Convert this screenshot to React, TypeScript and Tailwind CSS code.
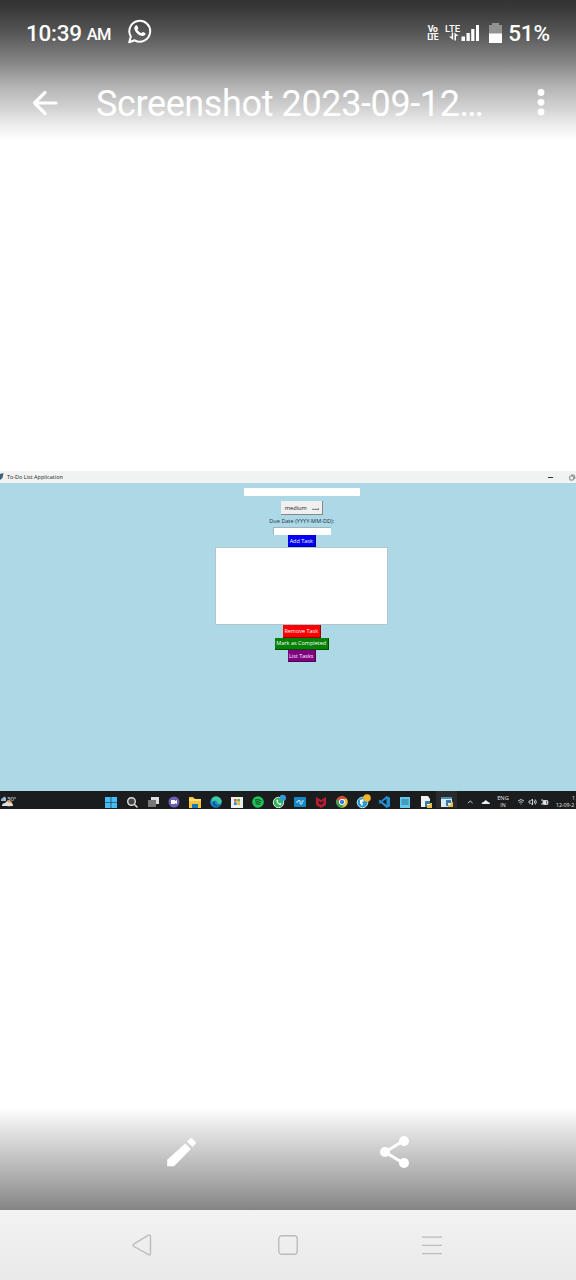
import type { ReactNode } from "react";

function StatusBar() {
  return (
    <div className="flex h-[66px] items-center pl-[26px] pr-[26px]">
      <span className="text-[22.5px] font-medium leading-none tracking-[-0.25px]">10:39</span>
      <span className="ml-[5px] mt-[4px] text-[16.5px] font-medium leading-none tracking-[-0.9px]">AM</span>
      <svg className="mb-[3px] ml-[18px]" width="24" height="25" viewBox="0 0 24 25" fill="none">
        <path d="M1.2 23.2 2.8 17.5a10.4 10.4 0 1 1 3.9 3.8z" stroke="white" strokeWidth="2" strokeLinejoin="round" />
        <path d="M8.2 6.3c.7-.2 1 .1 1.200.6l.9 2c.2.5-.8 1.300-.9 1.700 0 .7 2.500 3.300 3.800 3.500.6 0 1.200-1.400 1.800-1.200l2.100 1c.7.300.4 1.300 0 1.900-.8 1-2.200 1.500-3.600 1-3.300-.9-6.400-3.800-7.100-6.900-.3-1.500.5-3.100 1.800-3.600z" fill="white" />
      </svg>
      <div className="ml-auto flex w-[11px] flex-col text-[9px] font-bold leading-[8px]">
        <span className="pl-[0.5px] tracking-[-0.5px]">Vo</span>
        <span className="text-[8.5px] tracking-[-1.2px]">LTE</span>
      </div>
      <svg className="mb-[1px] ml-[6.500px]" width="35" height="18" viewBox="0 0 35 18" fill="white">
        <text x="0" y="8" fontSize="9.500" fontWeight="500" textLength="15" fontFamily="Roboto, sans-serif">LTE</text>
        <path d="M6.700 8.500h1.500V16L4 12.500h2.700zM9.500 16.500V8.500l4 3.500H11v4.500zM16.500 12.500H20V17h-3.500zM21.500 9h3.300v8h-3.300zM26.200 5h3.200v12h-3.200zM31 1h3v16h-3z" />
      </svg>
      <svg className="mb-[1px] ml-[9px]" width="13" height="20" viewBox="0 0 13 20">
        <path d="M3 0h7v2h3v9H0V2h3z" fill="#929292" />
        <path d="M0 10.500h13V20H0z" fill="white" />
      </svg>
      <span className="ml-[6.500px] text-[22.5px] font-medium leading-none tracking-[-0.1px]">51%</span>
    </div>
  );
}

function ViewerHeader() {
  return (
    <header className="h-[140px] bg-[linear-gradient(180deg,#333_0px,#383838_8px,#555_32px,#858585_62px,#b3b3b3_86px,#d2d2d2_108px,#eee_126px,#fff_140px)] text-white">
      <StatusBar />
      <div className="flex h-[74px] items-center pl-[32px]">
        <svg className="mb-[1px]" width="26" height="26" viewBox="0 0 26 26" fill="none" stroke="white" strokeWidth="3.200" strokeLinecap="round" strokeLinejoin="round">
          <path d="M24 13H2.500M13 2.500 2.500 13 13 23.500" />
        </svg>
        <h1 className="ml-[38px] mt-[2px] w-[390px] whitespace-nowrap text-[36px] leading-none tracking-[-0.38px]">Screenshot 2023-09-12…</h1>
        <svg className="mb-[1px] ml-[51px]" width="8" height="27" viewBox="0 0 8 27" fill="white">
          <circle cx="4" cy="3.500" r="3.400" />
          <circle cx="4" cy="13.300" r="3.400" />
          <circle cx="4" cy="23" r="3.400" />
        </svg>
      </div>
    </header>
  );
}

function TkButton({ className, children }: { className: string; children: ReactNode }) {
  return (
    <button className={`flex h-[12.300px] items-center justify-center whitespace-nowrap border-b border-r border-black/40 pt-[1.500px] text-[5.500px] leading-none text-white ${className}`}>
      {children}
    </button>
  );
}

function TodoWindow() {
  return (
    <section className="flex h-[320px] flex-col bg-[#add8e6] font-['Open_Sans',sans-serif]">
      <div className="flex h-[12px] shrink-0 items-center bg-[#f1f2f2]">
        <svg width="4" height="8" viewBox="0 0 4 8"><path d="M0 1 3.500 0 2.500 5 0 7z" fill="#416078" /></svg>
        <span className="ml-[3px] mt-[1px] text-[5.500px] leading-none text-[#222]">To-Do List Application</span>
        <span className="ml-auto h-[1px] w-[5px] bg-[#333]" />
        <svg className="ml-[16px]" width="7" height="7" viewBox="0 0 7 7" fill="none" stroke="#666" strokeWidth=".8">
          <rect x=".7" y="2" width="4" height="4" rx=".7" />
          <path d="M2 1h2.500q1.300 0 1.300 1.300V5" />
        </svg>
      </div>
      <div className="flex flex-col items-center pl-[27.500px] pt-[5px]">
        <div className="h-[8px] w-[116px] bg-white" />
        <div className="mt-[5px] flex h-[14px] w-[42px] items-center border-b border-r border-[#888] bg-[#f0f0f0] pl-[4px] pr-[3px] pt-[2px] text-[5.700px] leading-none text-[#222]">
          medium
          <span className="ml-auto h-[2px] w-[7px] border-b border-r border-[#888] bg-[#ddd]" />
        </div>
        <div className="flex h-[11.500px] items-center pt-[2px] text-[5.600px] leading-none text-[#203038]">Due Date (YYYY-MM-DD):</div>
        <div className="h-[8px] w-[58px] border-l border-t border-[#9db6c0] bg-white" />
        <TkButton className="mt-[0.500px] w-[28px] bg-[#0000f5]">Add Task</TkButton>
        <div className="h-[78px] w-[173px] border border-[#b5c5cb] bg-white" />
        <TkButton className="w-[38px] bg-[#fb0000]">Remove Task</TkButton>
        <TkButton className="w-[54px] bg-[#048004]">Mark as Completed</TkButton>
        <TkButton className="w-[28px] bg-[#800080]">List Tasks</TkButton>
      </div>
    </section>
  );
}

const taskIcons: ReactNode[] = [
  <g key="windows" fill="#42bdf5"><path d="M0 1h5.700v5.200H0zM6.300 1H12v5.200H6.300zM0 6.800h5.700V12H0zM6.300 6.800H12V12H6.300z" /></g>,
  <g key="search" fill="#444" stroke="#ddd" strokeWidth="1.400"><circle cx="5.500" cy="5.500" r="3.800" /><path d="m8.500 8.500 3 3" /></g>,
  <g key="desktops"><path d="M4 1h8v7H4z" fill="#ddd" /><path d="M1 4h8v7H1z" fill="#777" /></g>,
  <g key="chat"><circle cx="6" cy="6" r="5.500" fill="#6960b5" /><path d="M3 4h4v1.200L9 4v4L7 7v1H3z" fill="#fff" /></g>,
  <g key="files"><path d="M0 1h4l2 2h6v9H0z" fill="#f5c33c" /><path d="M0 3h12v2H0z" fill="#ffe078" /><path d="M3 8h6v4H3z" fill="#1878b5" /></g>,
  <g key="edge"><circle cx="6" cy="6" r="5.800" fill="#178cc7" /><path d="M2 2.500c4-4 9-1 9.800 3C11 8.500 8 8 7 7c1-3-3-3.500-5-1z" fill="#42cc9c" /><path d="M5 5c-1 4 2 5 5 4-3 3-8 1-7-3z" fill="#125093" /></g>,
  <g key="store"><path d="M0 1h12v11H0z" fill="#eee" /><path d="M3 3h2.700v2.700H3z" fill="#e65c36" /><path d="M6.300 3H9v2.700H6.300z" fill="#6eae38" /><path d="M3 6.300h2.700V9H3z" fill="#258cce" /><path d="M6.300 6.300H9V9H6.300z" fill="#edb42d" /></g>,
  <g key="spotify"><circle cx="6" cy="6" r="5.800" fill="#1cc557" /><path d="M3 4q3-1 6.500.7M3.300 6q3-.7 5.500.7M3.700 8q2-.6 4.300.5" stroke="#163523" fill="none" /></g>,
  <g key="whatsapp"><circle cx="5.500" cy="6.500" r="5.200" fill="#30b45a" stroke="#dcefe2" strokeWidth="1" /><path d="M3.500 4c0 3 2 5 4.500 5l.5-1.500L7 7l-.8.7-1.500-1.900.5-.8-.6-1.400z" fill="#fff" /><circle cx="9.800" cy="2" r="3.200" fill="#319bd4" /></g>,
  <g key="app"><path d="M0 1h12v10H0z" fill="#1685c4" /><path d="M2 6h2V4.500h2V8h2V5h2" stroke="#b7e7fb" fill="none" /></g>,
  <g key="mcafee"><path d="m1 1 5 3 5-3v8l-5 3-5-3z" fill="#b91e34" /><path d="m3.500 4.500 2.500 1.500 2.500-1.500v3L6 9 3.500 7.500z" fill="#441923" /></g>,
  <g key="chrome"><circle cx="6" cy="6" r="5.800" fill="#e7c137" /><path d="M1 3a5.800 5.800 0 0 1 10 0H6L3.500 7.500z" fill="#df4437" /><path d="M1 3a5.800 5.800 0 0 0 5 8.800l2.500-4.300h-5z" fill="#36a15a" /><circle cx="6" cy="6" r="2.700" fill="#377fe4" stroke="#fff" /></g>,
  <g key="browser"><circle cx="5.500" cy="6.500" r="5.300" fill="#279bd4" stroke="#c7e8f3" /><path d="m3 4 3-1 1 2-2 1 1 2-1 2-2-3z" fill="#fff" /><circle cx="10" cy="2" r="3.800" fill="#f1b62b" /></g>,
  <g key="vscode"><path d="M8.500 0 12 1.500v9L8.500 12 .5 5l1.300-1.200 6.700 5v-6l-6.700 5L.5 7z" fill="#238fd0" /></g>,
  <g key="notepad"><path d="M1 1h10v11H1z" fill="#65c5e4" /><path d="M2.500 4h7M2.500 6h7M2.500 8h7" stroke="#237399" /></g>,
  <g key="python-file"><path d="M1 0h7l2 3v8H1z" fill="#f0f0ec" /><path d="M5 5h5v3H7v3H5z" fill="#397fab" /><path d="M12 7v5H7V9h3V7z" fill="#e5bd45" /></g>,
  <g key="python-window"><path d="M0 1h11v10H0z" fill="#d9ebf1" /><path d="M0 1h11v2H0z" fill="#4a91b3" /><path d="M5 4h5v3H7v3H5z" fill="#3979a8" /><path d="M12 6v5H7V9h3V6z" fill="#e5bd45" /></g>,
];

function Taskbar() {
  return (
    <footer className="flex h-[17.500px] items-center overflow-hidden whitespace-nowrap bg-[#1b1c1d] font-['Open_Sans',sans-serif] text-[5.200px] leading-none text-[#e8e8e8]">
      <svg className="mt-[3px] shrink-0" width="16" height="15" viewBox="0 0 16 15">
        <path d="M1 6q0-2 2-2 1-3 3 0v3H1z" fill="#9bb8d5" />
        <circle cx="9" cy="9.500" r="3" fill="#eba23d" />
        <path d="M2 12q0-3 3-3 2-3 4 0 4-1 4 3z" fill="#dce0e5" />
        <text x="7" y="6.500" fontSize="6" fill="#eee">30°</text>
      </svg>
      <div className="ml-[84px] flex shrink-0">
        {taskIcons.map((icon, index) => (
          <div key={index} className={`flex h-[17px] w-[21px] shrink-0 items-center justify-center pt-[5px] ${index === 16 ? "bg-[#2a2b2d]" : ""}`}>
            <svg width="12" height="12" viewBox="0 0 12 12" overflow="visible">{icon}</svg>
          </div>
        ))}
      </div>
      <svg className="ml-[10px] mt-[5px] shrink-0" width="24" height="8" viewBox="0 0 24 8">
        <path d="m1 5 2.300-2 2.300 2" fill="none" stroke="#ccc" />
        <path d="M14.500 6q0-2 2.200-2 2-3.500 4.300 0 2 0 2 2z" fill="#eee" />
      </svg>
      <div className="ml-[5px] mt-[4px] flex w-[14px] shrink-0 flex-col items-center leading-[7px]">
        <span className="text-[5.700px]">ENG</span><span>IN</span>
      </div>
      <svg className="ml-[7px] mt-[4px] shrink-0" width="34" height="8" viewBox="0 0 34 8" fill="none" stroke="#ddd" strokeWidth=".9">
        <path d="M1 3q3-3 6 0M2.300 4.500q1.700-1.600 3.400 0M4 5.500v1M12 3h1.500L15.500 1v6l-2-2H12zM17 2.500q1.500 1.500 0 3M18.300 1.500q2 2.500 0 5M24 2h2v4h-2M26.500 2.500h4v4h-4zM31 3.500v2" />
        <path d="M27 3h2v3h-2z" fill="#eee" />
      </svg>
      <div className="ml-[5px] mt-[4px] flex w-[20px] shrink-0 flex-col items-end leading-[7px]">
        <span className="pr-[1px]">1</span><span className="self-start">12-09-2</span>
      </div>
    </footer>
  );
}

function ViewerActions() {
  return (
    <div className="flex h-[102px] items-start bg-[linear-gradient(180deg,#fff_0%,#dedede_26%,#c2c2c2_50%,#a1a1a1_78%,#848484_100%)]">
      <svg className="ml-[166px] mt-[28.500px]" width="32" height="32" viewBox="0 0 32 32" fill="white">
        <path d="m19.200 6.400 5.700 5.600L8 29.200H1.200v-6.500zM21 4.500l2.700-2.800q1.300-1.300 2.600 0l3.100 3.100q1.100 1.200 0 2.300l-2.800 3z" />
      </svg>
      <svg className="ml-[181px] mt-[27px]" width="32" height="34" viewBox="0 0 32 34" fill="white">
        <path d="M25 5.500 6 17l19 11.500" fill="none" stroke="white" strokeWidth="3" />
        <circle cx="25" cy="6" r="5" /><circle cx="6" cy="17" r="5" /><circle cx="25" cy="28" r="5" />
      </svg>
    </div>
  );
}

function NavigationBar() {
  return (
    <nav className="flex h-[70px] items-center bg-[linear-gradient(180deg,#f3f3f3,#e9e9e9)] pl-[132px]">
      <svg width="20" height="22" viewBox="0 0 20 22" fill="none" stroke="#bcbcbc" strokeWidth="1.400"><path d="M16.500 1.200Q18.500.5 18.500 2.800v16.400q0 2.400-2 1.500L2 12.500q-2-1.300 0-2.700z" /></svg>
      <svg className="ml-[126px]" width="20" height="20" viewBox="0 0 20 20" fill="none" stroke="#bcbcbc" strokeWidth="1.400"><rect x=".8" y=".8" width="18.400" height="18.400" rx="2.800" /></svg>
      <svg className="ml-[124px]" width="20" height="20" viewBox="0 0 20 20" stroke="#bcbcbc" strokeWidth="1.300"><path d="M0 2.200h20M0 10.400h20M0 18.600h20" /></svg>
    </nav>
  );
}

export default function App() {
  return (
    <main className="flex h-[1280px] w-[576px] flex-col overflow-hidden bg-white font-['Roboto',sans-serif]">
      <ViewerHeader />
      <div className="mt-[331px] overflow-hidden"><TodoWindow /><Taskbar /></div>
      <div className="mt-auto"><ViewerActions /><NavigationBar /></div>
    </main>
  );
}
